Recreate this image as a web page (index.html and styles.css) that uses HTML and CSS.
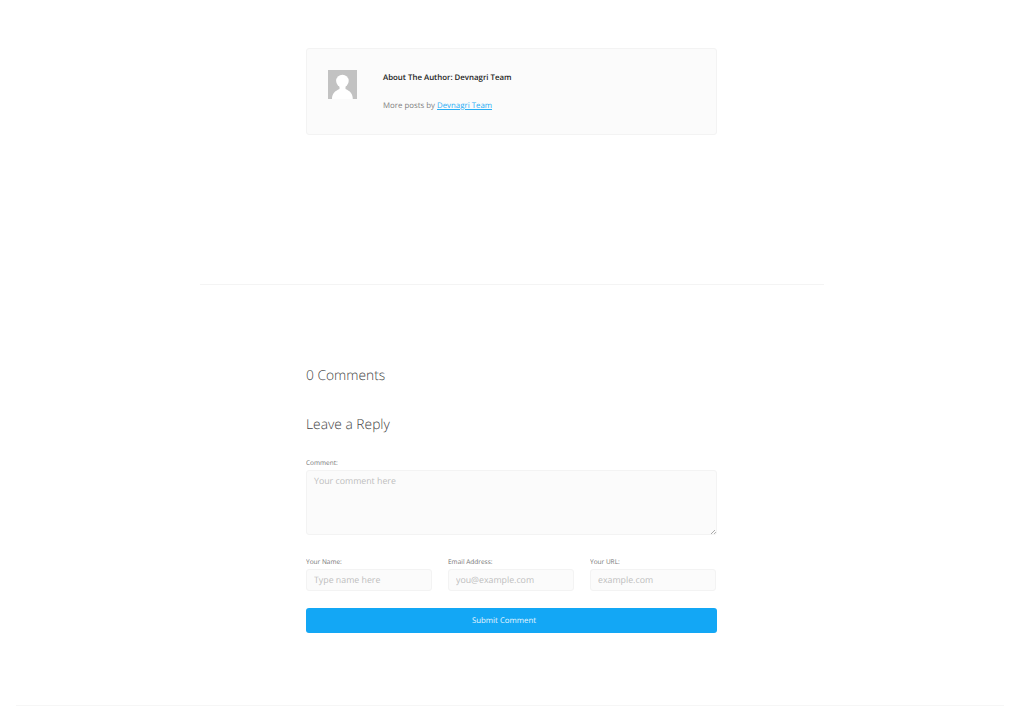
FILE: index.html
```html
<!DOCTYPE html>
<html lang="en">
<head>
    <meta charset="UTF-8">
    <meta name="viewport" content="width=device-width, initial-scale=1.0">
    <title>Leave a Reply</title>
    <link rel="stylesheet" href="styles.css">
</head>
<body>
    <div class="post-column">
        <div class="author-box">
            <svg class="author-avatar" viewBox="0 0 29 29" aria-hidden="true">
                <rect width="29" height="29" fill="#c2c2c2"/>
                <circle cx="14.400" cy="11" r="6.300" fill="#fff"/>
                <path d="M4 29C4 23.500 7 21 11.500 19V15H17.500V19C22 21 24.800 23.500 24.800 29z" fill="#fff"/>
            </svg>
            <div class="author-info">
                <h4 class="author-title">About The Author: Devnagri Team</h4>
                <p class="author-more">More posts by <a href="#">Devnagri Team</a></p>
            </div>
        </div>
    </div>

    <hr class="post-divider">

    <div class="post-column">
        <h3 class="comments-title">0 Comments</h3>
        <h3 class="reply-title">Leave a Reply</h3>

        <form class="comment-form">
            <label class="field">
                <span class="field-label">Comment:</span>
                <textarea class="field-input field-textarea" placeholder="Your comment here"></textarea>
            </label>

            <div class="field-row">
                <label class="field">
                    <span class="field-label">Your Name:</span>
                    <input class="field-input" type="text" placeholder="Type name here">
                </label>
                <label class="field">
                    <span class="field-label">Email Address:</span>
                    <input class="field-input" type="text" placeholder="you@example.com">
                </label>
                <label class="field">
                    <span class="field-label">Your URL:</span>
                    <input class="field-input" type="text" placeholder="example.com">
                </label>
            </div>

            <button class="submit-btn" type="button">Submit Comment</button>
        </form>
    </div>

    <hr class="footer-divider">
</body>
</html>
```

FILE: styles.css
```css
* {
    margin: 0;
    padding: 0;
    box-sizing: border-box;
    font-family: 'Open Sans', 'Liberation Sans', sans-serif;
    text-rendering: geometricPrecision;
}

body {
    background-color: #fff;
    color: #333;
    height: 723px;
    overflow: hidden;
    padding-top: 48px;
}

.post-column {
    width: 411px;
    margin-left: 306px;
}

.author-box {
    display: flex;
    align-items: flex-start;
    gap: 26px;
    height: 87px;
    padding: 21px;
    background-color: #fbfbfb;
    border: 1px solid #f3f3f3;
    border-radius: 3px;
}

.author-avatar {
    width: 29px;
    height: 29px;
    flex-shrink: 0;
}

.author-info {
    padding-top: 2px;
}

.author-title {
    font-size: 7.85px;
    font-weight: 600;
    line-height: 12px;
    color: #222;
    margin-bottom: 16px;
}

.author-more {
    font-size: 7.85px;
    line-height: 12px;
    color: #808080;
}

.author-more a {
    color: #2aaef5;
}

.post-divider {
    border: 0;
    border-top: 1px solid #f4f4f4;
    width: 624px;
    margin: 149px 0 0 200px;
}

.comments-title,
.reply-title {
    font-size: 13.8px;
    font-weight: 300;
    line-height: 20px;
    color: #444;
}

.comments-title {
    margin-top: 81px;
}

.reply-title {
    margin-top: 29px;
}

.comment-form {
    margin-top: 23px;
}

.field {
    display: block;
}

.field-label {
    display: block;
    font-size: 6.5px;
    line-height: 9px;
    color: #666;
    opacity: .9;
    margin-bottom: 3px;
}

.field-input {
    display: block;
    width: 100%;
    height: 22px;
    padding: 0 7px;
    font-size: 8.8px;
    color: #333;
    background-color: #fbfbfb;
    border: 1px solid #f3f3f3;
    border-radius: 3px;
    outline: none;
}

.field-input::placeholder {
    color: #bdbdbd;
    opacity: 1;
}

.field-textarea {
    height: 65px;
    padding: 4px 7px;
    line-height: 12px;
    resize: none;
    background-image: linear-gradient(135deg, transparent 50%, #aaa 50%, #aaa 60%, transparent 60%, transparent 75%, #aaa 75%, #aaa 85%, transparent 85%);
    background-size: 5px 5px;
    background-position: right 0 bottom 0;
    background-repeat: no-repeat;
}

.field-row {
    display: grid;
    grid-template-columns: repeat(3, 126px);
    gap: 16px;
    margin-top: 22px;
}

.submit-btn {
    display: block;
    width: 100%;
    height: 25px;
    margin-top: 17px;
    padding-right: 15px;
    font-size: 7.85px;
    color: #e8f6fe;
    background-color: #13a7f5;
    border: 0;
    border-radius: 3px;
}

.footer-divider {
    border: 0;
    border-top: 1px solid #f6f6f6;
    width: 988px;
    margin: 72px 0 0 16px;
}
```
